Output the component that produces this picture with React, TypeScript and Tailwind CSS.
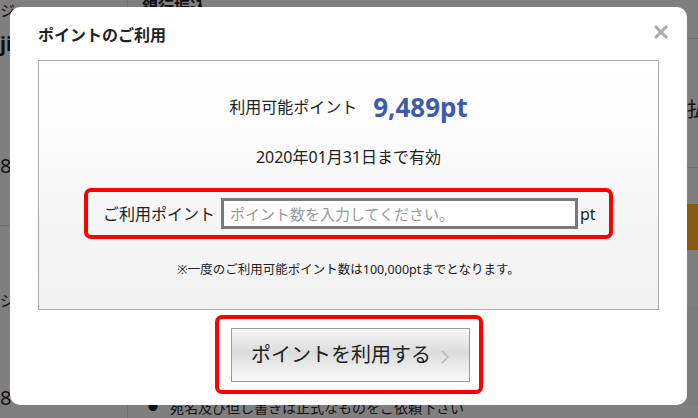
import React from "react";

const font = { fontFamily: '"Noto Sans", "Noto Sans CJK JP", sans-serif' };

function CloseIcon() {
  return (
    <svg width="14" height="14" viewBox="0 0 14 14">
      <path d="M2 2 L12 12 M12 2 L2 12" stroke="#a9a9a9" strokeWidth="3" strokeLinecap="square" />
    </svg>
  );
}

function Backdrop() {
  // the dimmed page sitting behind the modal
  return (
    <div className="flex h-[418px] w-[698px] bg-[#7f7f7f] text-[#111]">
      <div className="flex w-[128px] flex-col border-r border-[#6f6f6f]">
        <div className="h-[24px] text-[15px] leading-[20px]">ジ</div>
        <div className="h-[130px] text-[20px] font-bold leading-[40px]">ji</div>
        <div className="h-[72px] border-b border-[#707070] text-[20px] leading-[24px]">8</div>
        <div className="h-[100px] pt-[64px] text-[15px] leading-[20px]">ジ</div>
        <div className="pt-[60px] text-[20px] leading-[24px]">8</div>
      </div>
      <div className="flex flex-1 flex-col">
        <div className="pl-[14px] text-[16px] font-bold leading-[14px]">銀行振込</div>
        <div className="mt-auto flex h-[22px] items-center border-t border-[#7a6a66] pl-[20px] text-[14px]">
          <span className="mr-[12px] text-[10px]">●</span>宛名及び但し書きは正式なものをご依頼下さい
        </div>
      </div>
      <div className="flex w-[11px] flex-col overflow-hidden">
        <div className="mt-[38px] h-[30px] border-t border-[#6f6f6f]" />
        <div className="h-[100px] border-b border-[#6f6f6f] pt-[28px] text-[20px] leading-[28px]">払</div>
        <div className="mt-[36px] h-[46px] bg-[#8a5a10]" />
        <div className="mt-[56px] h-[100px] bg-[#7c7c7c]" />
      </div>
    </div>
  );
}

export default function App() {
  return (
    <div className="relative h-[418px] w-[698px] overflow-hidden" style={font}>
      <Backdrop />

      {/* modal */}
      <div className="absolute left-[10px] top-[7px] h-[398px] w-[677px] rounded-[10px] bg-white px-[28px] pt-[18px]">
        <button className="absolute right-[19px] top-[18px]">
          <CloseIcon />
        </button>
        <h2 className="mb-[15px] text-[16px] font-bold leading-[20px] text-[#222]">ポイントのご利用</h2>

        <div className="flex h-[250px] w-[621px] flex-col items-center border border-[#aaa] bg-gradient-to-b from-white to-[#f1f1f1] text-[#222]">
          <div className="mt-[33px] flex h-[26px] items-center gap-[16px]">
            <span className="text-[16px]">利用可能ポイント</span>
            <span className="text-[26px] font-bold text-[#3d5ba8]">9,489pt</span>
          </div>
          <div className="mt-[27px] text-[16px] leading-[20px]">2020年01月31日まで有効</div>

          <div className="mt-[21px] flex h-[51px] w-[529px] items-center rounded-[7px] border-[4px] border-[#ff0000] pl-[15px]">
            <span className="text-[16px]">ご利用ポイント</span>
            <input
              className="ml-[6px] h-[31px] w-[357px] border-[3px] border-[#7a7a7a] bg-white px-[6px] text-[15px] outline-none placeholder:text-[#999]"
              placeholder="ポイント数を入力してください。"
            />
            <span className="ml-[2px] text-[16px]">pt</span>
          </div>

          <div className="mt-[23px] text-[12.5px] leading-[16px]">※一度のご利用可能ポイント数は100,000ptまでとなります。</div>
        </div>

        <div className="mt-[5px] flex justify-center">
          <div className="flex h-[79px] w-[268px] items-center justify-center rounded-[7px] border-[4px] border-[#ff0000] pl-[3px]">
            <button className="flex h-[54px] w-[239px] items-center justify-center gap-[10px] border border-[#999] bg-[linear-gradient(to_bottom,#f7f7f7_0%,#dcdcdc_45%,#f2f2f2_85%,#fafafa_100%)] text-[20px] text-[#222]">
              <span>ポイントを利用する</span>
              <svg width="8" height="14" viewBox="0 0 8 14" className="mt-[4px]">
                <path d="M1 1 L7 7 L1 13" fill="none" stroke="#b5b5b5" strokeWidth="1.5" />
              </svg>
            </button>
          </div>
        </div>
      </div>
    </div>
  );
}
